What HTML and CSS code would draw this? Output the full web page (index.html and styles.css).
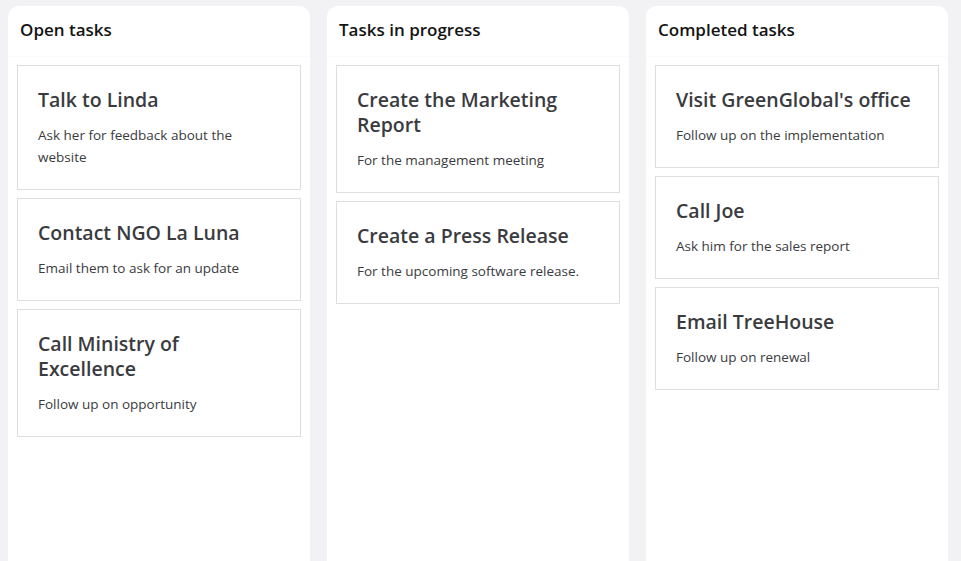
FILE: index.html
```html
<!DOCTYPE html>
<html lang="en">
<head>
<meta charset="utf-8">
<title>Task board</title>
<link rel="stylesheet" href="styles.css">
</head>
<body>
<main class="board">
  <section class="column">
    <header class="column-header">Open tasks</header>
    <div class="column-body">
      <article class="card">
        <h2 class="card-title">Talk to Linda</h2>
        <p class="card-text">Ask her for feedback about the website</p>
      </article>
      <article class="card">
        <h2 class="card-title">Contact NGO La Luna</h2>
        <p class="card-text">Email them to ask for an update</p>
      </article>
      <article class="card">
        <h2 class="card-title">Call Ministry of Excellence</h2>
        <p class="card-text">Follow up on opportunity</p>
      </article>
    </div>
  </section>
  <section class="column">
    <header class="column-header">Tasks in progress</header>
    <div class="column-body">
      <article class="card">
        <h2 class="card-title">Create the Marketing Report</h2>
        <p class="card-text">For the management meeting</p>
      </article>
      <article class="card">
        <h2 class="card-title">Create a Press Release</h2>
        <p class="card-text">For the upcoming software release.</p>
      </article>
    </div>
  </section>
  <section class="column">
    <header class="column-header">Completed tasks</header>
    <div class="column-body">
      <article class="card">
        <h2 class="card-title">Visit GreenGlobal's office</h2>
        <p class="card-text">Follow up on the implementation</p>
      </article>
      <article class="card">
        <h2 class="card-title">Call Joe</h2>
        <p class="card-text">Ask him for the sales report</p>
      </article>
      <article class="card">
        <h2 class="card-title">Email TreeHouse</h2>
        <p class="card-text">Follow up on renewal</p>
      </article>
    </div>
  </section>
</main>
</body>
</html>
```
FILE: styles.css
```css
* { box-sizing: border-box; }
html, body { margin: 0; height: 100%; }
body {
  background: #f2f2f4;
  font-family: "Open Sans", "Noto Sans", sans-serif;
  overflow: hidden;
}
.board {
  display: grid;
  grid-template-columns: repeat(3, 1fr);
  gap: 17px;
  padding: 6px 13px 0 8px;
  height: 100%;
}
.column {
  display: flex;
  flex-direction: column;
  background: #fff;
  border-radius: 11px 11px 0 0;
}
.column-header {
  height: 50px;
  padding: 12px 12px 0;
  font-size: 17px;
  line-height: 24px;
  font-weight: 600;
  color: #141414;
  border-radius: 11px 11px 0 0;
  box-shadow: 0 1px 1px rgba(0, 0, 0, 0.02);
}
.column-body {
  flex: 1;
  display: flex;
  flex-direction: column;
  gap: 8px;
  padding: 9px 9px 0 9px;
}
.card {
  border: 1px solid #dedede;
  padding: 21px 20px 21px;
  background: #fff;
}
.card-title {
  margin: 0;
  font-size: 19.5px;
  line-height: 25px;
  font-weight: 600;
  color: #3a3b3f;
}
.card-text {
  margin: 12px 0 0;
  font-size: 13.5px;
  line-height: 22px;
  color: #3a3b3e;
}
```
